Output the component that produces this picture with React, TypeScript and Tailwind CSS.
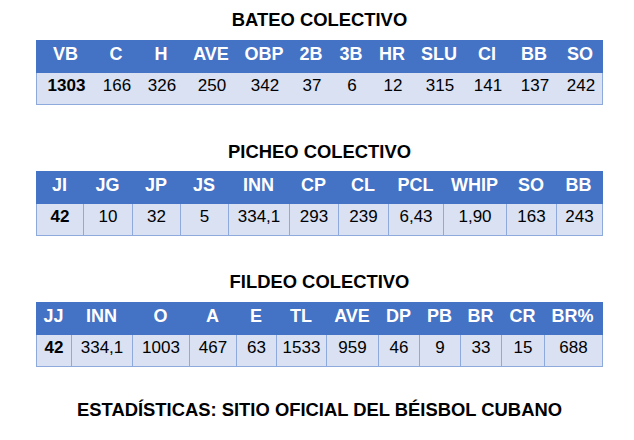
type Cell = { head: string; value: string }

type TableProps = {
  cols: string
  cells: Cell[]
  lines?: boolean
}

const bateo: Cell[] = [
  { head: 'VB', value: '1303' },
  { head: 'C', value: '166' },
  { head: 'H', value: '326' },
  { head: 'AVE', value: '250' },
  { head: 'OBP', value: '342' },
  { head: '2B', value: '37' },
  { head: '3B', value: '6' },
  { head: 'HR', value: '12' },
  { head: 'SLU', value: '315' },
  { head: 'CI', value: '141' },
  { head: 'BB', value: '137' },
  { head: 'SO', value: '242' },
]

const picheo: Cell[] = [
  { head: 'JI', value: '42' },
  { head: 'JG', value: '10' },
  { head: 'JP', value: '32' },
  { head: 'JS', value: '5' },
  { head: 'INN', value: '334,1' },
  { head: 'CP', value: '293' },
  { head: 'CL', value: '239' },
  { head: 'PCL', value: '6,43' },
  { head: 'WHIP', value: '1,90' },
  { head: 'SO', value: '163' },
  { head: 'BB', value: '243' },
]

const fildeo: Cell[] = [
  { head: 'JJ', value: '42' },
  { head: 'INN', value: '334,1' },
  { head: 'O', value: '1003' },
  { head: 'A', value: '467' },
  { head: 'E', value: '63' },
  { head: 'TL', value: '1533' },
  { head: 'AVE', value: '959' },
  { head: 'DP', value: '46' },
  { head: 'PB', value: '9' },
  { head: 'BR', value: '33' },
  { head: 'CR', value: '15' },
  { head: 'BR%', value: '688' },
]

function Title({ children, className }: { children: React.ReactNode; className: string }) {
  return (
    <h2 className={`text-center text-[18.4px] leading-[22px] font-bold text-black ${className}`}>
      {children}
    </h2>
  )
}

function StatsTable({ cols, cells, lines = true }: TableProps) {
  return (
    <div>
      <div className={`grid ${cols} h-[33px] bg-[#4472C4]`}>
        {cells.map((c) => (
          <div key={c.head} className="pt-[3px] text-center text-[18px] leading-[22px] font-bold text-white">
            {c.head}
          </div>
        ))}
      </div>
      <div className={`grid ${cols} h-[32px] bg-[#D9E1F2] border-l border-b border-r border-[#8EA9DB]`}>
        {cells.map((c, i) => (
          <div
            key={c.head}
            className={`pt-[2px] text-center text-[17px] leading-[22px] text-black ${i === 0 ? 'font-bold' : ''} ${
              lines && i < cells.length - 1 ? 'border-r border-[#8EA9DB]' : ''
            }`}
          >
            {c.value}
          </div>
        ))}
      </div>
    </div>
  )
}

export default function App() {
  return (
    <div className="w-[634px] h-[440px] bg-white pt-[9px] font-['Liberation_Sans',Arial,sans-serif]">
      <div className="w-[567px] ml-[36px]">
        <Title className="">BATEO COLECTIVO</Title>
        <div className="mt-[9px]">
          <StatsTable
            cols="grid-cols-[59px_42px_48px_52px_54px_40px_40px_42px_52px_44px_50px_42px]"
            cells={bateo}
            lines={false}
          />
        </div>

        <Title className="mt-[36px]">PICHEO COLECTIVO</Title>
        <div className="mt-[8px]">
          <StatsTable
            cols="grid-cols-[47px_49px_48px_48px_61px_49px_50px_55px_63px_50px_45px]"
            cells={picheo}
          />
        </div>

        <Title className="mt-[35px]">FILDEO COLECTIVO</Title>
        <div className="mt-[9px]">
          <StatsTable
            cols="grid-cols-[35px_61px_57px_47px_40px_50px_52px_41px_41px_41px_43px_57px]"
            cells={fildeo}
          />
        </div>

        <Title className="mt-[32px]">ESTADÍSTICAS: SITIO OFICIAL DEL BÉISBOL CUBANO</Title>
      </div>
    </div>
  )
}
